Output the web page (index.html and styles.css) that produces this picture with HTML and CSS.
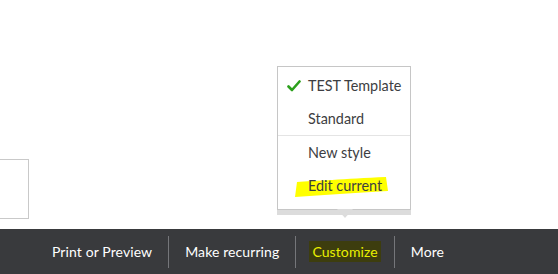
FILE: index.html
```html
<!DOCTYPE html>
<html>
<head>
<meta charset="utf-8">
<link rel="stylesheet" href="styles.css">
</head>
<body>
<div class="page">
  <div class="content">
    <div class="field"></div>
    <div class="menu">
      <div class="menu-group first">
        <div class="menu-item selected">
          <svg class="check" width="14" height="12" viewBox="0 0 14 12"><path d="M1.5 6.5 L5 10 L12.5 1.5" fill="none" stroke="#2ca01c" stroke-width="2.6" stroke-linecap="round" stroke-linejoin="round"/></svg>
          <span>TEST Template</span>
        </div>
        <div class="menu-item"><span>Standard</span></div>
      </div>
      <div class="menu-group last">
        <div class="menu-item"><span>New style</span></div>
        <div class="menu-item marked">
          <svg class="marker" width="96" height="22" viewBox="0 0 96 22"><path d="M3 6 C20 5 50 3 92 1 L94 15 C60 17 30 19 1 21 Z" fill="#ffff00"/></svg>
          <span>Edit current</span>
        </div>
      </div>
      <div class="menu-foot"><span class="caret"></span></div>
    </div>
  </div>
  <div class="bar">
    <div class="bar-item">Print or Preview</div>
    <div class="bar-item">Make recurring</div>
    <div class="bar-item"><span class="hl">Customize</span></div>
    <div class="bar-item">More</div>
  </div>
</div>
</body>
</html>
```
FILE: styles.css
```css
html, body {
  margin: 0;
  padding: 0;
  background: #fff;
}
body {
  font-family: "Lato", "Noto Sans", sans-serif;
  width: 558px;
  height: 274px;
  overflow: hidden;
}
.page {
  display: flex;
  flex-direction: column;
  height: 274px;
}
.content {
  position: relative;
  height: 229px;
  flex: none;
}
.field {
  position: absolute;
  left: -2px;
  top: 159px;
  width: 29px;
  height: 58px;
  border: 1px solid #c9c9c9;
  background: #fff;
}
.menu {
  position: absolute;
  left: 277px;
  top: 66px;
  width: 132px;
  border: 1px solid #c6c6c6;
  border-bottom: none;
  background: #fff;
  font-size: 14.4px;
  color: #3d3e42;
}
.menu-group.first {
  padding-top: 2px;
}
.menu-group.last {
  padding-bottom: 7px;
  border-top: 1px solid #e4e4e4;
}
.menu-item {
  position: relative;
  height: 33px;
  display: flex;
  align-items: center;
  padding-left: 30px;
}
.menu-item span {
  position: relative;
}
.check {
  position: absolute;
  left: 9px;
  top: 11px;
}
.marker {
  position: absolute;
  left: 16px;
  top: 7px;
}
.menu-foot {
  position: relative;
  height: 5px;
  margin: 0 -1px;
  background: #dcdcdc;
  border-top: 1px solid #c6c6c6;
}
.caret {
  position: absolute;
  left: 60px;
  top: -1px;
  width: 0;
  height: 0;
  border-left: 8px solid transparent;
  border-right: 8px solid transparent;
  border-top: 9px solid #dcdcdc;
}
.bar {
  flex: 1;
  background: #393a3d;
  display: flex;
  align-items: center;
  padding-left: 36px;
  color: #fff;
  font-size: 14px;
  letter-spacing: 0.1px;
}
.bar-item {
  padding: 0 16px;
  height: 32px;
  display: flex;
  align-items: center;
}
.bar-item + .bar-item {
  border-left: 1px solid #75767a;
}
.hl {
  background: #3d3d0e;
  color: #e9f000;
  padding: 2px 3px;
  margin: 0 -3px;
}
```
